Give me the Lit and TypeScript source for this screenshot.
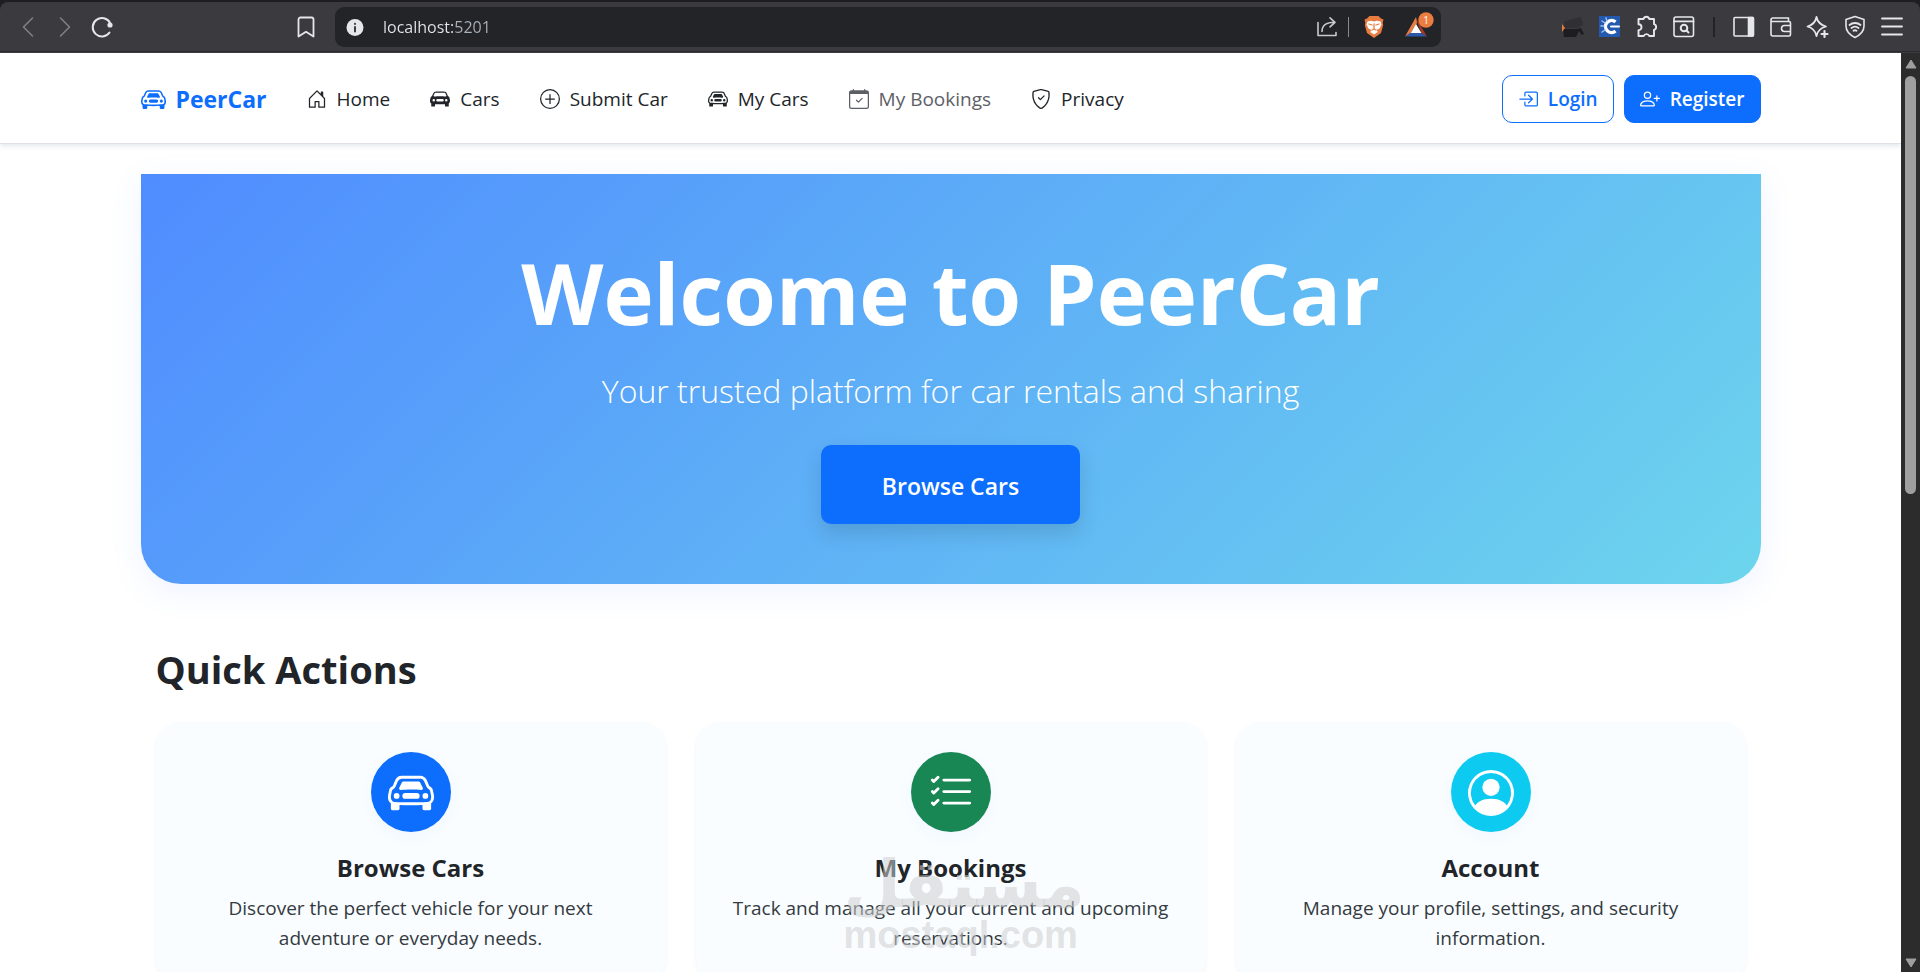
import { LitElement, html, css, svg, type SVGTemplateResult } from "lit";
import { customElement } from "lit/decorators.js";
import { classMap } from "lit/directives/class-map.js";

const carBody =
  "M2.52 3.515A2.5 2.5 0 0 1 4.82 2h6.362c1 0 1.904.596 2.298 1.515l.792 1.848c.075.175.21.319.38.404.5.25.855.715.965 1.262l.335 1.679q.05.242.049.49v.413c0 .814-.39 1.543-1 1.997V13.5a.5.5 0 0 1-.5.5h-2a.5.5 0 0 1-.5-.5v-1.338c-1.292.048-2.745.088-4 .088s-2.708-.04-4-.088V13.5a.5.5 0 0 1-.5.5h-2a.5.5 0 0 1-.5-.5v-1.892c-.61-.454-1-1.183-1-1.997v-.413a2.5 2.5 0 0 1 .049-.49l.335-1.68c.11-.546.465-1.012.964-1.261a.8.8 0 0 0 .381-.404l.792-1.848Z";

const paths: Record<string, string[]> = {
  house: [
    "M8.354 1.146a.5.5 0 0 0-.708 0l-6 6A.5.5 0 0 0 1.5 7.5v7a.5.5 0 0 0 .5.5h4.5a.5.5 0 0 0 .5-.5v-4h2v4a.5.5 0 0 0 .5.5H14a.5.5 0 0 0 .5-.5v-7a.5.5 0 0 0-.146-.354L13 5.793V2.5a.5.5 0 0 0-.5-.5h-1a.5.5 0 0 0-.5.5v1.293zM2.5 14V7.707l5.5-5.5 5.5 5.5V14H10v-4a.5.5 0 0 0-.5-.5h-3a.5.5 0 0 0-.5.5v4z",
  ],
  car: [
    "M4 9a1 1 0 1 1-2 0 1 1 0 0 1 2 0m10 0a1 1 0 1 1-2 0 1 1 0 0 1 2 0M6 8a1 1 0 0 0 0 2h4a1 1 0 1 0 0-2zM4.862 4.276 3.906 6.19a.51.51 0 0 0 .497.731c.91-.073 2.35-.17 3.597-.17s2.688.097 3.597.17a.51.51 0 0 0 .497-.731l-.956-1.913A.5.5 0 0 0 10.691 4H5.309a.5.5 0 0 0-.447.276",
    carBody +
      "M4.82 3a1.5 1.5 0 0 0-1.379.91l-.792 1.847a1.8 1.8 0 0 1-.853.904.8.8 0 0 0-.43.564L1.03 8.904a1.5 1.5 0 0 0-.03.294v.413c0 .796.62 1.448 1.408 1.484 1.555.07 3.786.155 5.592.155s4.037-.084 5.592-.155A1.48 1.48 0 0 0 15 9.611v-.413q0-.148-.03-.294l-.335-1.68a.8.8 0 0 0-.43-.563 1.8 1.8 0 0 1-.853-.904l-.792-1.848A1.5 1.5 0 0 0 11.18 3z",
  ],
  carFill: [
    carBody +
      "M3 10a1 1 0 1 0 0-2 1 1 0 0 0 0 2m10 0a1 1 0 1 0 0-2 1 1 0 0 0 0 2M6 8a1 1 0 0 0 0 2h4a1 1 0 1 0 0-2zM2.906 5.189a.51.51 0 0 0 .497.731c.91-.073 3.35-.17 4.597-.17s3.688.097 4.597.17a.51.51 0 0 0 .497-.731l-.956-1.913A.5.5 0 0 0 11.691 3H4.309a.5.5 0 0 0-.447.276L2.906 5.19Z",
  ],
  plus: [
    "M8 15A7 7 0 1 1 8 1a7 7 0 0 1 0 14m0 1A8 8 0 1 0 8 0a8 8 0 0 0 0 16",
    "M8 4a.5.5 0 0 1 .5.5v3h3a.5.5 0 0 1 0 1h-3v3a.5.5 0 0 1-1 0v-3h-3a.5.5 0 0 1 0-1h3v-3A.5.5 0 0 1 8 4",
  ],
  calendar: [
    "M10.854 7.146a.5.5 0 0 1 0 .708l-3 3a.5.5 0 0 1-.708 0l-1.5-1.5a.5.5 0 1 1 .708-.708L7.5 9.793l2.646-2.647a.5.5 0 0 1 .708 0",
    "M3.5 0a.5.5 0 0 1 .5.5V1h8V.5a.5.5 0 0 1 1 0V1h1a2 2 0 0 1 2 2v11a2 2 0 0 1-2 2H2a2 2 0 0 1-2-2V3a2 2 0 0 1 2-2h1V.5a.5.5 0 0 1 .5-.5M1 4v10a1 1 0 0 0 1 1h12a1 1 0 0 0 1-1V4z",
  ],
  shield: [
    "M5.338 1.59a61 61 0 0 0-2.837.856.48.48 0 0 0-.328.39c-.554 4.157.726 7.19 2.253 9.188a10.7 10.7 0 0 0 2.287 2.233c.346.244.652.42.893.533q.18.085.293.118a1 1 0 0 0 .101.025 1 1 0 0 0 .1-.025q.114-.034.294-.118c.24-.113.547-.29.893-.533a10.7 10.7 0 0 0 2.287-2.233c1.527-1.997 2.807-5.031 2.253-9.188a.48.48 0 0 0-.328-.39c-.651-.213-1.75-.56-2.837-.855C9.552 1.29 8.531 1.067 8 1.067c-.53 0-1.552.223-2.662.524zM5.072.56C6.157.265 7.31 0 8 0s1.843.265 2.928.56c1.11.3 2.229.655 2.887.87a1.54 1.54 0 0 1 1.044 1.262c.596 4.477-.787 7.795-2.465 9.99a11.8 11.8 0 0 1-2.517 2.453 7 7 0 0 1-1.048.625c-.28.132-.581.24-.829.24s-.548-.108-.829-.24a7 7 0 0 1-1.048-.625 11.8 11.8 0 0 1-2.517-2.453C1.928 10.487.545 7.169 1.141 2.692A1.54 1.54 0 0 1 2.185 1.43 63 63 0 0 1 5.072.56",
    "M10.854 5.146a.5.5 0 0 1 0 .708l-3 3a.5.5 0 0 1-.708 0l-1.5-1.5a.5.5 0 1 1 .708-.708L7.5 7.793l2.646-2.647a.5.5 0 0 1 .708 0",
  ],
  login: [
    "M6 3.5a.5.5 0 0 1 .5-.5h8a.5.5 0 0 1 .5.5v9a.5.5 0 0 1-.5.5h-8a.5.5 0 0 1-.5-.5v-2a.5.5 0 0 0-1 0v2A1.5 1.5 0 0 0 6.5 14h8a1.5 1.5 0 0 0 1.5-1.5v-9A1.5 1.5 0 0 0 14.5 2h-8A1.5 1.5 0 0 0 5 3.5v2a.5.5 0 0 0 1 0z",
    "M11.854 8.354a.5.5 0 0 0 0-.708l-3-3a.5.5 0 1 0-.708.708L10.293 7.5H1.5a.5.5 0 0 0 0 1h8.793l-2.147 2.146a.5.5 0 0 0 .708.708z",
  ],
  register: [
    "M6 8a3 3 0 1 0 0-6 3 3 0 0 0 0 6m2-3a2 2 0 1 1-4 0 2 2 0 0 1 4 0m4 8c0 1-1 1-1 1H1s-1 0-1-1 1-4 6-4 6 3 6 4m-1-.004c-.001-.246-.154-.986-.832-1.664C9.516 10.68 8.289 10 6 10s-3.516.68-4.168 1.332c-.678.678-.83 1.418-.832 1.664z",
    "M13.5 5a.5.5 0 0 1 .5.5V7h1.5a.5.5 0 0 1 0 1H14v1.5a.5.5 0 0 1-1 0V8h-1.5a.5.5 0 0 1 0-1H13V5.5a.5.5 0 0 1 .5-.5",
  ],
  list: [
    "M5 11.5a.5.5 0 0 1 .5-.5h9a.5.5 0 0 1 0 1h-9a.5.5 0 0 1-.5-.5m0-4a.5.5 0 0 1 .5-.5h9a.5.5 0 0 1 0 1h-9a.5.5 0 0 1-.5-.5m0-4a.5.5 0 0 1 .5-.5h9a.5.5 0 0 1 0 1h-9a.5.5 0 0 1-.5-.5M3.854 2.146a.5.5 0 0 1 0 .708l-1.5 1.5a.5.5 0 0 1-.708 0l-.5-.5a.5.5 0 1 1 .708-.708L2 3.293l1.146-1.147a.5.5 0 0 1 .708 0m0 4a.5.5 0 0 1 0 .708l-1.5 1.5a.5.5 0 0 1-.708 0l-.5-.5a.5.5 0 1 1 .708-.708L2 7.293l1.146-1.147a.5.5 0 0 1 .708 0m0 4a.5.5 0 0 1 0 .708l-1.5 1.5a.5.5 0 0 1-.708 0l-.5-.5a.5.5 0 0 1 .708-.708l.146.147 1.146-1.147a.5.5 0 0 1 .708 0",
  ],
  person: [
    "M11 6a3 3 0 1 1-6 0 3 3 0 0 1 6 0",
    "M0 8a8 8 0 1 1 16 0A8 8 0 0 1 0 8m8-7a7 7 0 0 0-5.468 11.37C3.242 11.226 4.805 10 8 10s4.757 1.225 5.468 2.37A7 7 0 0 0 8 1",
  ],
};

const icon = (name: string) => html`
  <svg class="icon" viewBox="0 0 16 16" fill="currentColor" fill-rule="evenodd" aria-hidden="true">
    ${paths[name].map((d) => svg`<path d=${d}></path>`)}
  </svg>
`;

const tool = (label: string, art: SVGTemplateResult, dim = false) => html`
  <button class=${classMap({ tool: true, dim })} type="button" aria-label=${label}>
    <svg viewBox="0 0 22 22" fill="none" stroke="currentColor" stroke-width="1.6" stroke-linecap="round" stroke-linejoin="round">
      ${art}
    </svg>
  </button>
`;

@customElement("browser-bar")
class BrowserBar extends LitElement {
  static styles = css`
    :host {
      display: block;
      background: #1e1d23;
      padding-top: 2px;
    }
    .bar {
      display: flex;
      align-items: center;
      height: 50px;
      box-sizing: border-box;
      padding: 0 17px;
      background: #3b3a3f;
      border-bottom: 1px solid #2b2a2f;
      border-radius: 8px 8px 0 0;
      color: #e6e7e9;
    }
    .group {
      display: flex;
      align-items: center;
      gap: 15px;
    }
    .tool {
      display: block;
      width: 22px;
      height: 22px;
      padding: 0;
      border: 0;
      background: none;
      color: inherit;
    }
    .tool svg {
      display: block;
      width: 22px;
      height: 22px;
      overflow: visible;
    }
    .dim {
      color: #7f7f84;
    }
    .mark {
      margin: 0 18px 0 182px;
    }
    .address {
      flex: 1;
      display: flex;
      align-items: center;
      gap: 17px;
      height: 40px;
      box-sizing: border-box;
      padding: 0 14px 0 9px;
      margin-right: 121px;
      border-radius: 9px;
      background: #232428;
    }
    .url {
      flex: 1;
      min-width: 0;
      padding: 0;
      border: 0;
      outline: 0;
      font: 16px/24px "Open Sans", "Noto Sans", sans-serif;
      color: transparent;
      background: linear-gradient(90deg, #e4e8ee 72px, #a9b1bb 72px);
      -webkit-background-clip: text;
      background-clip: text;
    }
    .tail {
      display: flex;
      align-items: center;
      gap: 10px;
      color: #c9cacc;
    }
    .shields {
      display: flex;
      gap: 20px;
      margin-left: 4px;
    }
    .line {
      width: 1px;
      height: 20px;
      background: #8a8a8d;
    }
    .split {
      width: 2px;
      height: 20px;
      margin: 0 3px;
      background: #232226;
    }
    .badge {
      font: 10px "Open Sans", "Noto Sans", sans-serif;
    }
  `;

  render() {
    return html`
      <div class="bar">
        <div class="group">
          ${tool("Back", svg`<path d="M15.5 2 6.500 11l9 9"/>`, true)}
          ${tool("Forward", svg`<path d="M6.500 2l9 9-9 9"/>`, true)}
          ${tool(
            "Reload",
            svg`<path stroke-width="2" d="M18.500 16.500a9.200 9.200 0 1 1 .6-9.500"/><circle cx="19" cy="9" r="2.600" fill="currentColor" stroke="none"/>`,
          )}
        </div>
        <div class="mark">
          ${tool("Bookmark", svg`<path stroke-width="1.800" d="M3.500 3.500a2 2 0 0 1 2-2h11a2 2 0 0 1 2 2v17L11 15.800 3.500 20.500z"/>`)}
        </div>
        <div class="address">
          ${tool(
            "Site information",
            svg`<circle cx="11" cy="11.500" r="8.500" fill="currentColor" stroke="none"/><path d="M11 11v4.500M11 7.700v.2" stroke="#3b3a3f" stroke-width="2"/>`,
          )}
          <input class="url" type="text" aria-label="Address" value="localhost:5201" />
          <div class="tail">
            ${tool("Share", svg`<path d="M2 6.500V19.500h18v-3M6 15.500C6 9.500 9.500 6.300 18.500 6.300M14 1.800l5 4.500-5 4.500"/>`)}
            <span class="line"></span>
            <div class="shields">
              ${tool(
                "Brave Shields",
                svg`<path stroke="none" fill="#e87b3f" d="M6.500 0h9l2.500 2.500 2.500 1-.8 3.500.5 2-2.200 8L11 22l-7-5-2.200-8 .5-2-.8-3.500 2.500-1z"/><path stroke="none" fill="#fff" d="M4.500 5.500 8 4.800l3 .8 3-.8 3.500.7 1 3-2 4-3 1.500L14.800 16 11 18.500 7.200 16l1.300-2-3-1.500-2-4z"/><path stroke="#e87b3f" stroke-width="1.300" d="M6 8l3 1M16 8l-3 1M11 8v5M9 14l2-1 2 1"/>`,
              )}
              ${tool(
                "Rewards, 1 new",
                svg`<g stroke="none"><path fill="#2c58a8" d="M0 20.500h22L11 13z"/><path fill="#a33a24" d="M10.500 1 22 20.500 16 16.500z"/><path fill="#e87b3f" d="M11 1 0 20.500l6-4L12 7z"/><path fill="#fff" d="M11 8 5.800 17h10.600z"/><circle cx="21" cy="4" r="7.700" fill="#ec7d40"/><text class="badge" x="21" y="7.500" fill="#fff" text-anchor="middle">1</text></g>`,
              )}
            </div>
          </div>
        </div>
        <div class="group">
          ${tool(
            "Extension",
            svg`<g stroke="none"><path fill="#1d1c20" d="M1 13h14l4-1 3 6-2 1-3-4-3 6H2z"/><path fill="#303034" d="M2 6l5-2 12-3 2 8-6 3H2z"/><path fill="#e87b3f" d="M0 8l3 4-3 4z"/></g>`,
          )}
          ${tool(
            "Capture extension",
            svg`<rect x="0" y="0" width="21" height="21" fill="#2359ae" stroke="none"/><path d="M16.500 6A6 6 0 1 0 16.500 15" stroke="#fff" stroke-width="3.400" stroke-linecap="butt"/><path d="M12 10.500h8" stroke="#fff" stroke-width="2"/><path d="M3 5l3 2M2 10h3M3 16l3-2M7 2l1 3" stroke="#9cc4ef" stroke-width="1.500"/>`,
          )}
          ${tool(
            "Extensions",
            svg`<path stroke-width="1.900" d="M2.500 3h5a3 3 0 0 1 5.800 0h4.700v5.200a2.900 2.900 0 0 1 0 5.600V20h-4.700a3 3 0 0 0-5.600 0H2.500v-5.700a3 3 0 0 0 0-6z"/>`,
          )}
          ${tool(
            "Search page",
            svg`<rect x="1" y="1" width="19.500" height="19.500" rx="2"/><path d="M1 5.300h19.500" stroke-width="1.800"/><circle cx="11" cy="12" r="3.300" stroke-width="2"/><path d="M13.500 14.500l2 2" stroke-width="2"/>`,
          )}
          <span class="split"></span>
          ${tool(
            "Sidebar",
            svg`<rect x="1" y="1.500" width="19.500" height="18.500" rx="1"/><path d="M15.500 1.500H20V20h-4.500z" fill="currentColor"/>`,
          )}
          ${tool(
            "Wallet",
            svg`<path d="M18.500 5.500V2H3a2 2 0 0 0-2 2v14a2 2 0 0 0 2 2h16a1.500 1.500 0 0 0 1.500-1.500V7A1.500 1.500 0 0 0 19 5.500H2M20.500 9.500h-6a3 3 0 0 0 0 6h6"/>`,
          )}
          ${tool(
            "Assistant",
            svg`<path stroke-width="1.800" d="M9.500 1c1 5 3.500 7.700 9.500 9.500-6 1.500-8.500 4-9.500 9.500-1-5.500-3.500-8-9-9.500C6 9 8.500 6 9.500 1z"/><path d="M17.500 15v6M14.500 18h6" stroke-width="2.200"/>`,
          )}
          ${tool(
            "VPN",
            svg`<path d="M11 0.500 20 3.500V10c0 5-4 9-9 11.500C6 19 2 15 2 10V3.500z"/><path d="M5.500 9a8.500 8.500 0 0 1 11 0M7.500 12a5.500 5.500 0 0 1 7 0M9.500 14.800a2.500 2.500 0 0 1 3 0" stroke-width="1.800"/>`,
          )}
          ${tool("Menu", svg`<path d="M1 2.500h20M1 10.500h20M1 18.500h20" stroke-width="1.800"/>`)}
        </div>
      </div>
    `;
  }
}

@customElement("app-root")
class AppRoot extends LitElement {
  static styles = css`
    :host {
      display: flex;
      flex-direction: column;
      height: 100vh;
      overflow: hidden;
      background: #fff;
      color: #212529;
      font: 19px/30px "Open Sans", "Noto Sans", sans-serif;
    }
    browser-bar {
      flex: none;
      border-bottom: 1px solid #3b3a3f;
    }
    .window {
      flex: 1;
      min-height: 0;
      display: flex;
    }
    .page {
      flex: 1;
      min-width: 0;
      overflow: hidden;
      position: relative;
    }
    .scroll {
      width: 19px;
      box-sizing: border-box;
      display: flex;
      flex-direction: column;
      align-items: center;
      gap: 7px;
      padding: 6px 0 4px;
      background: #2c2c2c;
      color: #9f9f9f;
    }
    .thumb {
      width: 11px;
      flex: 0 0 46%;
      border-radius: 6px;
      background: #9f9f9f;
    }
    .arrow {
      width: 12px;
      height: 10px;
      display: block;
      flex: none;
    }
    .down {
      margin-top: auto;
    }
    .container {
      width: 1620px;
      max-width: calc(100% - 30px);
      margin: 0 auto;
    }
    .header {
      border-bottom: 1px solid #dee2e6;
      box-shadow: 0 2px 5px rgba(33, 60, 90, 0.12);
    }
    .nav {
      display: flex;
      align-items: center;
      height: 90px;
      box-sizing: border-box;
      padding-top: 2px;
    }
    a {
      color: inherit;
      text-decoration: none;
    }
    .icon {
      display: block;
      flex: none;
      width: 20px;
      height: 20px;
    }
    .brand {
      display: flex;
      align-items: center;
      gap: 10px;
      margin-right: 40px;
      color: #0d6efd;
      font-size: 23px;
      font-weight: 700;
    }
    .brand .icon {
      width: 25px;
      height: 25px;
    }
    .links {
      display: flex;
      gap: 40px;
      margin: 0;
      padding: 0;
      list-style: none;
    }
    .link,
    .btn {
      display: flex;
      align-items: center;
      gap: 10px;
    }
    .hover {
      color: #5c6066;
    }
    .auth {
      display: flex;
      gap: 10px;
      margin-left: auto;
    }
    .btn {
      padding: 8px 15px;
      border: 1px solid #0d6efd;
      border-radius: 10px;
      color: #0d6efd;
      font-weight: 600;
    }
    .solid {
      background: #0d6efd;
      color: #fff;
    }
    .main {
      padding-top: 30px;
    }
    .hero {
      display: flex;
      flex-direction: column;
      align-items: center;
      padding: 64px 30px 60px;
      border-radius: 0 0 40px 40px;
      background: linear-gradient(135deg, #4f8cff 0%, #6dd5ed 100%);
      box-shadow: 0 8px 32px rgba(79, 140, 255, 0.1);
      color: #fff;
      text-align: center;
    }
    .title {
      margin: 0 0 18px;
      font-size: 85px;
      line-height: 108px;
      font-weight: 700;
    }
    .lead {
      margin: 0 0 28px;
      font-size: 32px;
      line-height: 53px;
      font-weight: 300;
    }
    .cta {
      padding: 25px 61px 22px;
      border-radius: 10px;
      background: #0d6efd;
      box-shadow: 0 10px 20px rgba(0, 0, 0, 0.12);
      font-size: 23px;
      line-height: 32px;
      font-weight: 600;
    }
    .quick {
      padding: 61px 15px 30px;
    }
    .heading {
      margin: 0 0 29px;
      font-size: 38px;
      line-height: 48px;
      font-weight: 700;
    }
    .cards {
      display: grid;
      grid-template-columns: repeat(3, 1fr);
      gap: 30px;
    }
    .card {
      display: flex;
      flex-direction: column;
      align-items: center;
      padding: 30px;
      border-radius: 25px;
      background: #f9fdff;
      box-shadow: 0 2px 4px rgba(33, 60, 90, 0.06);
      text-align: center;
    }
    .disc {
      display: grid;
      place-items: center;
      width: 80px;
      height: 80px;
      box-sizing: border-box;
      padding-top: 2px;
      margin-bottom: 20px;
      border-radius: 50%;
      box-shadow: 0 5px 15px rgba(79, 140, 255, 0.05);
      color: #fff;
    }
    .disc .icon {
      width: 46px;
      height: 46px;
    }
    .blue {
      background: #0d6efd;
    }
    .green {
      background: #198754;
    }
    .cyan {
      background: #0dcaf0;
    }
    .name {
      margin: 0 0 9px;
      font-size: 24px;
      line-height: 32px;
      font-weight: 700;
    }
    .text {
      margin: 0;
      color: #343a40;
    }
    .watermark {
      position: absolute;
      left: 50%;
      bottom: 17px;
      width: 230px;
      margin-left: -107px;
      text-align: center;
      color: rgba(205, 205, 207, 0.55);
      font-family: "Liberation Sans", sans-serif;
      font-size: 38px;
      line-height: 40px;
      font-weight: 700;
      white-space: nowrap;
      pointer-events: none;
    }
    .arabic {
      display: block;
      font-family: "DejaVu Sans", sans-serif;
      font-size: 66px;
      line-height: 61px;
    }
  `;

  private links = [
    { icon: "house", label: "Home" },
    { icon: "carFill", label: "Cars" },
    { icon: "plus", label: "Submit Car" },
    { icon: "car", label: "My Cars" },
    { icon: "calendar", label: "My Bookings", hover: true },
    { icon: "shield", label: "Privacy" },
  ];

  private cards = [
    {
      icon: "car",
      tone: "blue",
      name: "Browse Cars",
      text: "Discover the perfect vehicle for your next adventure or everyday needs.",
    },
    {
      icon: "list",
      tone: "green",
      name: "My Bookings",
      text: "Track and manage all your current and upcoming reservations.",
    },
    {
      icon: "person",
      tone: "cyan",
      name: "Account",
      text: "Manage your profile, settings, and security information.",
    },
  ];

  render() {
    return html`
      <browser-bar></browser-bar>
      <div class="window">
        <div class="page">
          <header class="header">
            <nav class="container nav">
              <a class="brand" href="#">${icon("car")}<span>PeerCar</span></a>
              <ul class="links">
                ${this.links.map(
                  (l) => html`<li>
                    <a class=${classMap({ link: true, hover: !!l.hover })} href="#">${icon(l.icon)}<span>${l.label}</span></a>
                  </li>`,
                )}
              </ul>
              <div class="auth">
                <a class="btn" href="#">${icon("login")}<span>Login</span></a>
                <a class="btn solid" href="#">${icon("register")}<span>Register</span></a>
              </div>
            </nav>
          </header>
          <main class="container main">
            <section class="hero">
              <h1 class="title">Welcome to PeerCar</h1>
              <p class="lead">Your trusted platform for car rentals and sharing</p>
              <a class="cta" href="#">Browse Cars</a>
            </section>
            <section class="quick">
              <h2 class="heading">Quick Actions</h2>
              <div class="cards">
                ${this.cards.map(
                  (c) => html`<article class="card">
                    <div class="disc ${c.tone}">${icon(c.icon)}</div>
                    <h3 class="name">${c.name}</h3>
                    <p class="text">${c.text}</p>
                  </article>`,
                )}
              </div>
            </section>
          </main>
          <div class="watermark"><span class="arabic" lang="ar">مستقل</span>mostaql.com</div>
        </div>
        <div class="scroll" aria-hidden="true">
          <svg class="arrow" viewBox="0 0 12 10"><path d="M6 1 11 9H1z" fill="currentColor" stroke="currentColor" stroke-linejoin="round"></path></svg>
          <div class="thumb"></div>
          <svg class="arrow down" viewBox="0 0 12 10"><path d="M6 9 1 1h10z" fill="currentColor" stroke="currentColor" stroke-linejoin="round"></path></svg>
        </div>
      </div>
    `;
  }
}
